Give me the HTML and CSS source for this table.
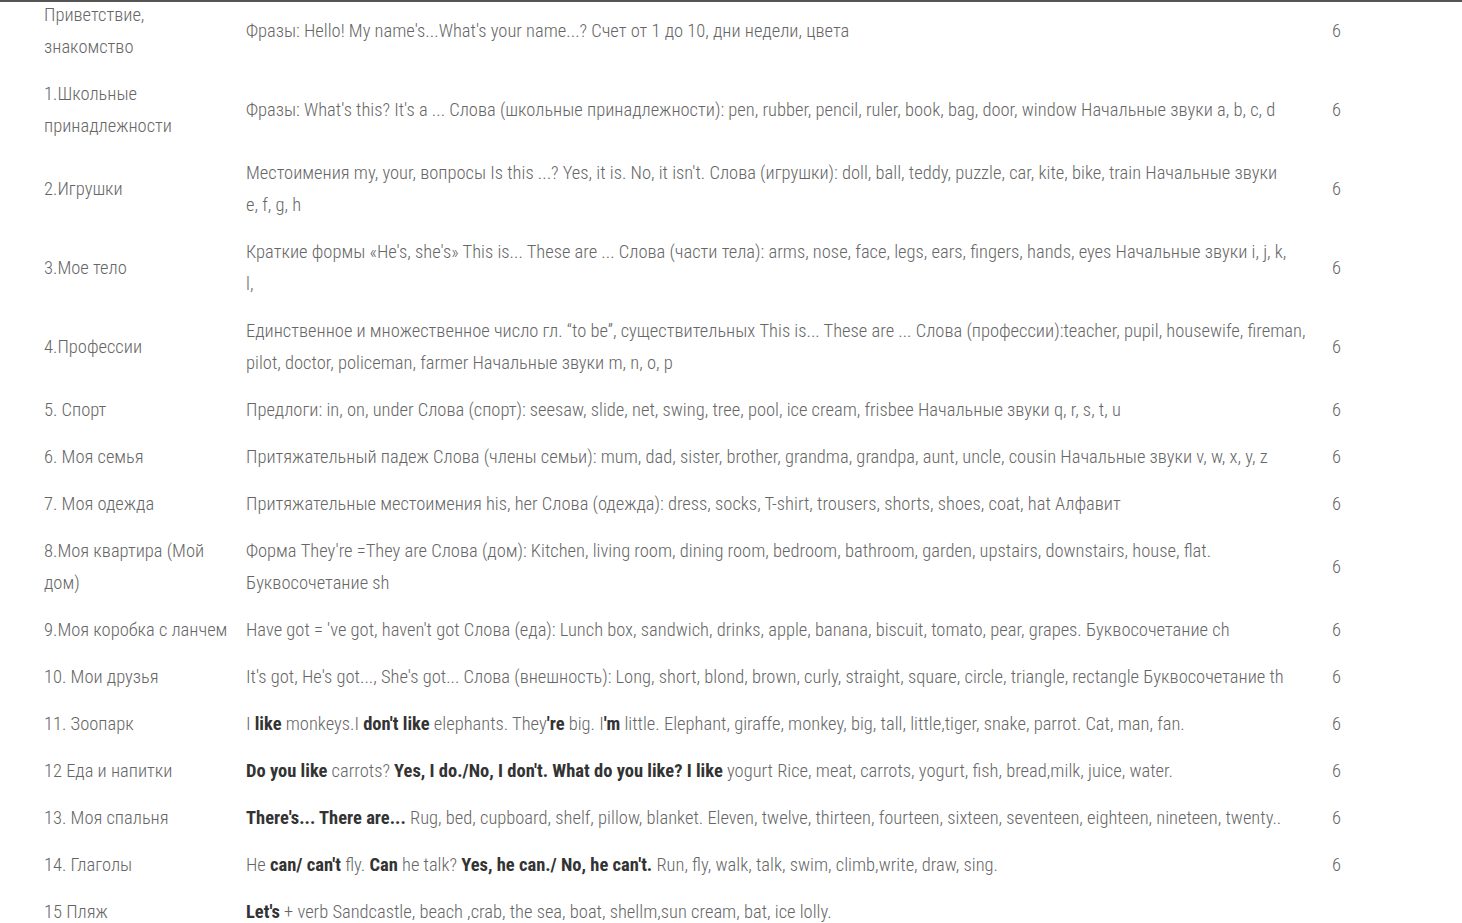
FILE: index.html
```html
<!DOCTYPE html>
<html lang="ru">
<head>
<meta charset="utf-8">
<title>Тематическое планирование</title>
<link rel="stylesheet" href="styles.css">
</head>
<body>
<div class="sheet">
<table class="plan">
<colgroup><col class="c-topic"><col class="c-content"><col class="c-hours"></colgroup>
<tbody>
<tr><td>Приветствие, знакомство</td><td class="content">Фразы: Hello! My name's...What's your name...? Счет от 1 до 10, дни недели, цвета</td><td>6</td></tr>
<tr><td>1.Школьные принадлежности</td><td class="content">Фразы: What's this? It's a ... Слова (школьные принадлежности): pen, rubber, pencil, ruler, book, bag, door, window Начальные звуки a, b, c, d</td><td>6</td></tr>
<tr><td>2.Игрушки</td><td class="content">Местоимения my, your, вопросы Is this ...? Yes, it is. No, it isn't. Слова (игрушки): doll, ball, teddy, puzzle, car, kite, bike, train Начальные звуки e,&nbsp;f,&nbsp;g,&nbsp;h</td><td>6</td></tr>
<tr><td>3.Мое тело</td><td class="content">Краткие формы «He's, she's» This is... These are ... Слова (части тела): arms, nose, face, legs, ears, fingers, hands, eyes Начальные звуки i, j, k,<br>l,</td><td>6</td></tr>
<tr><td>4.Профессии</td><td class="content">Единственное и множественное число гл. “to be”, существительных This is... These are ... Слова (профессии):teacher, pupil, housewife, fireman, pilot, doctor, policeman, farmer Начальные звуки m, n, o, p</td><td>6</td></tr>
<tr><td>5. Спорт</td><td class="content">Предлоги: in, on, under Слова (спорт): seesaw, slide, net, swing, tree, pool, ice cream, frisbee Начальные звуки q, r, s, t, u</td><td>6</td></tr>
<tr><td>6. Моя семья</td><td class="content">Притяжательный падеж Слова (члены семьи): mum, dad, sister, brother, grandma, grandpa, aunt, uncle, cousin Начальные звуки v, w, x, y, z</td><td>6</td></tr>
<tr><td>7. Моя одежда</td><td class="content">Притяжательные местоимения his, her Слова (одежда): dress, socks, T-shirt, trousers, shorts, shoes, coat, hat Алфавит</td><td>6</td></tr>
<tr><td>8.Моя квартира (Мой дом)</td><td class="content">Форма They're =They are Слова (дом): Kitchen, living room, dining room, bedroom, bathroom, garden, upstairs, downstairs, house, flat. Буквосочетание sh</td><td>6</td></tr>
<tr><td>9.Моя коробка с ланчем</td><td class="content">Have got = 've got, haven't got Слова (еда): Lunch box, sandwich, drinks, apple, banana, biscuit, tomato, pear, grapes. Буквосочетание ch</td><td>6</td></tr>
<tr><td>10. Мои друзья</td><td class="content">It's got, He's got..., She's got... Слова (внешность): Long, short, blond, brown, curly, straight, square, circle, triangle, rectangle Буквосочетание th</td><td>6</td></tr>
<tr><td>11. Зоопарк</td><td class="content">I <b>like</b> monkeys.I <b>don't like</b> elephants. They<b>'re</b> big. I<b>'m</b> little. Elephant, giraffe, monkey, big, tall, little,tiger, snake, parrot. Cat, man, fan.</td><td>6</td></tr>
<tr><td>12 Еда и напитки</td><td class="content"><b>Do you like</b> carrots? <b>Yes, I do./No, I don't. What do you like? I like</b> yogurt Rice, meat, carrots, yogurt, fish, bread,milk, juice, water.</td><td>6</td></tr>
<tr><td>13. Моя спальня</td><td class="content"><b>There's... There are...</b> Rug, bed, cupboard, shelf, pillow, blanket. Eleven, twelve, thirteen, fourteen, sixteen, seventeen, eighteen, nineteen, twenty..</td><td>6</td></tr>
<tr><td>14. Глаголы</td><td class="content">He <b>can/ can't</b> fly. <b>Can</b> he talk? <b>Yes, he can./ No, he can't.</b> Run, fly, walk, talk, swim, climb,write, draw, sing.</td><td>6</td></tr>
<tr><td>15 Пляж</td><td class="content"><b>Let's</b> + verb Sandcastle, beach ,crab, the sea, boat, shellm,sun cream, bat, ice lolly.</td><td></td></tr>
</tbody>
</table>
</div>
</body>
</html>
```
FILE: styles.css
```css
html, body {
  margin: 0;
  background: #ffffff;
}

body {
  font-family: "Roboto Condensed", "Open Sans", "Liberation Sans", sans-serif;
  font-weight: 300;
  font-size: 18.5px;
  line-height: 32px;
  color: #666666;
  overflow: hidden;
}

.sheet {
  border-top: 2px solid #555555;
}

.plan {
  border-collapse: collapse;
  table-layout: fixed;
  width: 1400px;
  margin: -10px 0 0 37px;
}

.c-topic { width: 202px; }
.c-content { width: 1086px; }
.c-hours { width: 112px; }

.plan td {
  padding: 7px 7px 8px;
  vertical-align: middle;
  text-align: left;
}

.plan td.content {
  padding-right: 16px;
}

.plan b {
  font-weight: 700;
  color: #333333;
}
```
